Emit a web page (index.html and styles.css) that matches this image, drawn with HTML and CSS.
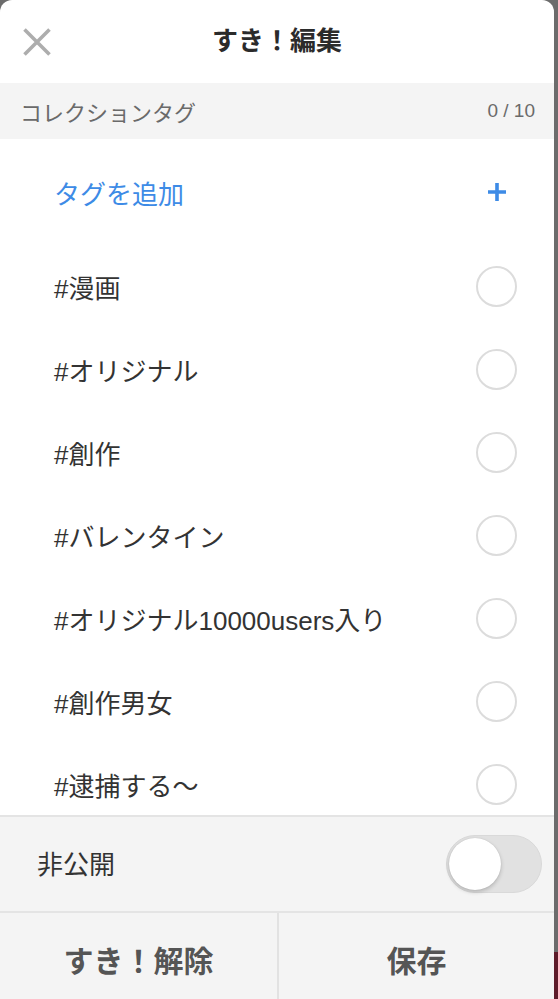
FILE: index.html
```html
<!DOCTYPE html>
<html lang="ja">
<head>
<meta charset="utf-8">
<title>すき！編集</title>
<link rel="stylesheet" href="styles.css">
</head>
<body>
<div class="modal">
  <header class="header">
    <button class="close" aria-label="閉じる">
      <svg width="28" height="28" viewBox="0 0 28 28"><path d="M1.5 1.5 L26.5 26.5 M26.5 1.5 L1.5 26.5" stroke="#adadad" stroke-width="3.6" fill="none"/></svg>
    </button>
    <h1 class="title">すき！編集</h1>
    <span class="spacer"></span>
  </header>
  <div class="section-head">
    <span class="section-label">コレクションタグ</span>
    <span class="count">0 / 10</span>
  </div>
  <div class="list">
    <div class="row add-row">
      <span class="add-label">タグを追加</span>
      <span class="mark">
        <svg width="20" height="20" viewBox="0 0 20 20"><path d="M10 1 V19 M1 10 H19" stroke="#3d8be6" stroke-width="3.6" fill="none"/></svg>
      </span>
    </div>
    <div class="row tag-row"><span class="tag">#漫画</span><span class="mark"><span class="circle"></span></span></div>
    <div class="row tag-row"><span class="tag">#オリジナル</span><span class="mark"><span class="circle"></span></span></div>
    <div class="row tag-row"><span class="tag">#創作</span><span class="mark"><span class="circle"></span></span></div>
    <div class="row tag-row"><span class="tag">#バレンタイン</span><span class="mark"><span class="circle"></span></span></div>
    <div class="row tag-row"><span class="tag">#オリジナル10000users入り</span><span class="mark"><span class="circle"></span></span></div>
    <div class="row tag-row"><span class="tag">#創作男女</span><span class="mark"><span class="circle"></span></span></div>
    <div class="row tag-row"><span class="tag">#逮捕する〜</span><span class="mark"><span class="circle"></span></span></div>
  </div>
  <div class="private">
    <span class="private-label">非公開</span>
    <span class="toggle"><span class="knob"></span></span>
  </div>
  <div class="actions">
    <button class="action">すき！解除</button>
    <button class="action">保存</button>
  </div>
</div>
</body>
</html>
```

FILE: styles.css
```css
* { box-sizing: border-box; }
html, body { margin: 0; padding: 0; }
body {
  width: 558px;
  height: 999px;
  overflow: hidden;
  background: linear-gradient(to bottom, #6c6c6c 0, #6c6c6c 952px, #5e1b2a 952px);
  font-family: "Liberation Sans", "Noto Sans CJK JP", sans-serif;
}
.modal {
  width: 554px;
  height: 999px;
  background: #fff;
  border-radius: 12px 12px 0 0;
  display: flex;
  flex-direction: column;
  overflow: hidden;
}
.header {
  height: 83px;
  flex: none;
  display: grid;
  grid-template-columns: 90px 1fr 90px;
  align-items: center;
}
.close {
  border: 0;
  background: none;
  padding: 0 0 0 23px;
  margin: 0;
  display: flex;
  align-items: center;
  height: 28px;
}
.title {
  margin: 0;
  text-align: center;
  font-size: 26px;
  font-weight: bold;
  color: #2b2b2b;
  line-height: 1;
  padding-bottom: 1px;
}
.section-head {
  height: 56px;
  flex: none;
  background: #f4f4f4;
  display: flex;
  align-items: center;
  justify-content: space-between;
  padding: 0 19px 0 20px;
}
.section-label {
  font-size: 22px;
  color: #6a6a6a;
}
.count {
  font-size: 19px;
  color: #6a6a6a;
}
.list {
  flex: 1;
  min-height: 0;
  overflow: hidden;
}
.row {
  display: flex;
  align-items: center;
  justify-content: space-between;
  padding: 0 37px 0 54px;
}
.add-row { height: 106px; }
.tag-row { height: 83px; }
.add-label {
  font-size: 26px;
  color: #3d8be6;
}
.tag {
  font-size: 26px;
  color: #333;
}
.mark {
  width: 41px;
  height: 41px;
  display: flex;
  align-items: center;
  justify-content: center;
}
.circle {
  width: 41px;
  height: 41px;
  border-radius: 50%;
  border: 2px solid #dcdcdc;
}
.private {
  height: 96px;
  flex: none;
  background: #f4f4f4;
  border-top: 2px solid #e4e4e4;
  display: flex;
  align-items: center;
  justify-content: space-between;
  padding: 0 12px 0 37px;
}
.private-label {
  font-size: 26px;
  color: #333;
  padding-bottom: 4px;
}
.toggle {
  width: 96px;
  height: 58px;
  border-radius: 29px;
  background: #e1e1e1;
  border: 1px solid #d9d9d9;
  display: flex;
  align-items: center;
  padding-left: 2px;
}
.knob {
  width: 52px;
  height: 52px;
  border-radius: 50%;
  background: #fff;
  box-shadow: 0 2px 4px rgba(0,0,0,0.2), 0 0 1px rgba(0,0,0,0.15);
}
.actions {
  flex: none;
  height: 88px;
  border-top: 2px solid #e4e4e4;
  background: #f4f4f4;
  display: grid;
  grid-template-columns: 277px 1fr;
}
.action {
  border: 0;
  margin: 0;
  background: #f4f4f4;
  font-family: "Liberation Sans", "Noto Sans CJK JP", sans-serif;
  font-size: 30px;
  font-weight: bold;
  color: #555;
  padding: 6px 0 0 0;
}
.action + .action {
  border-left: 2px solid #e2e2e2;
}
```
